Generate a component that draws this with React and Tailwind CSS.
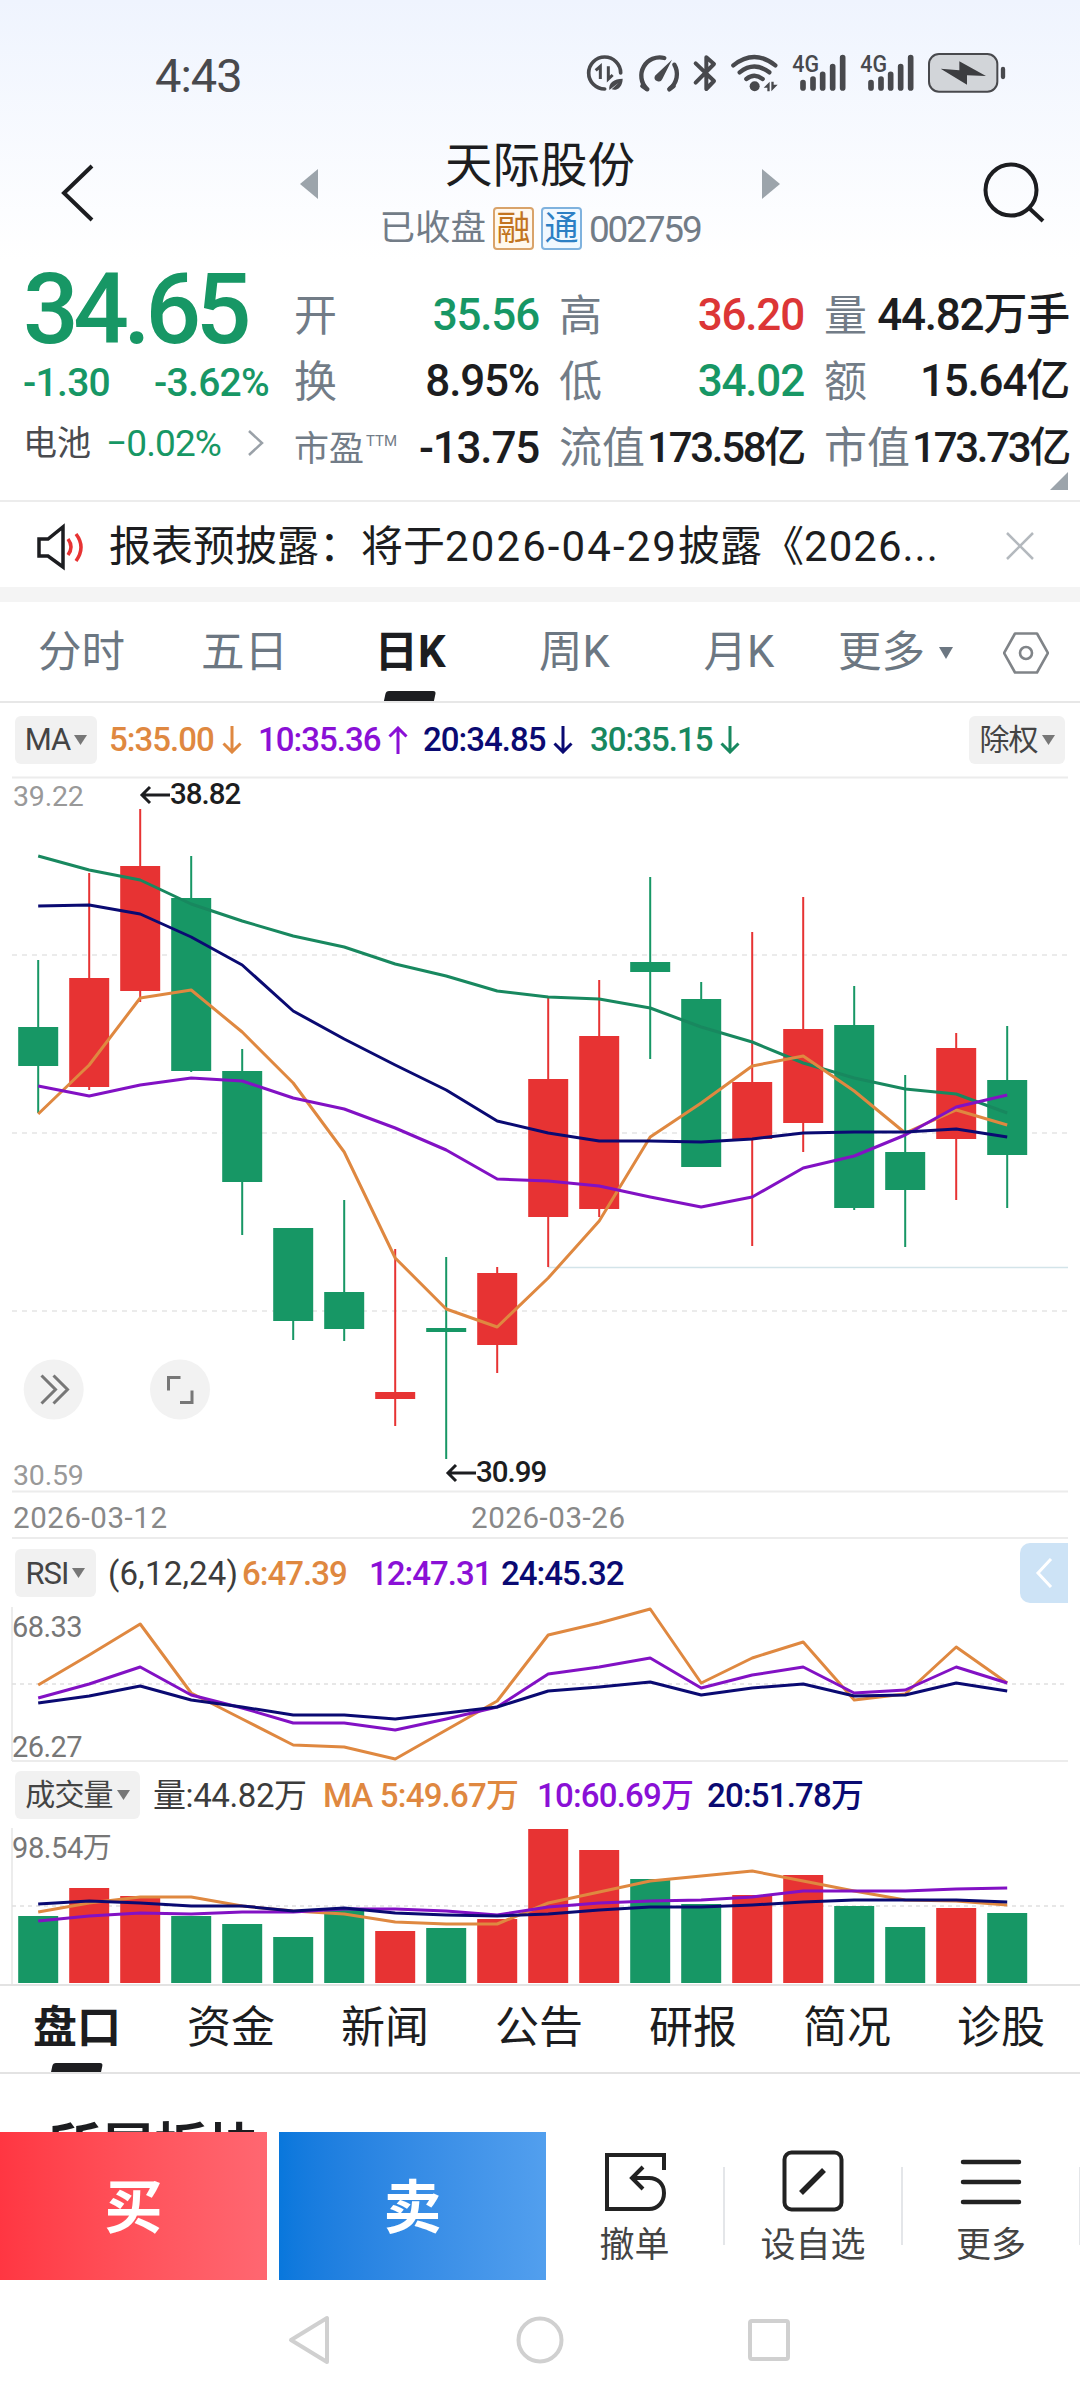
import React from 'react'

const UP = '#e73333'
const DOWN = '#179765'
const ORANGE = '#df8840'
const PURPLE = '#8211c4'
const NAVY = '#0a0a72'
const TEAL = '#18885f'

const FIRST_X = 38.2
const STEP = 51
const cx = (i) => FIRST_X + i * STEP

// [direction, high, body top, body bottom, low] in chart pixels
const candles = [
    ['down', 960, 1027, 1066, 1113],
    ['up', 873, 978, 1087, 1090],
    ['up', 809, 866, 991, 1002],
    ['down', 856, 898, 1071, 1072],
    ['down', 1049, 1071, 1182, 1235],
    ['down', 1228, 1228, 1321, 1340],
    ['down', 1200, 1292, 1329, 1341],
    ['up', 1249, 1392, 1399, 1426],
    ['down', 1257, 1328, 1332, 1459],
    ['up', 1267, 1273, 1345, 1373],
    ['up', 997, 1079, 1217, 1267],
    ['up', 980, 1036, 1209, 1217],
    ['down', 877, 962, 972, 1059],
    ['down', 982, 999, 1167, 1167],
    ['up', 932, 1082, 1139, 1246],
    ['up', 897, 1029, 1123, 1152],
    ['down', 986, 1025, 1208, 1210],
    ['down', 1075, 1152, 1190, 1247],
    ['up', 1033, 1048, 1139, 1200],
    ['down', 1026, 1080, 1155, 1208]
]

const maLines = [
    { color: TEAL, points: [856, 870, 880, 904, 921, 936, 947, 964, 976, 991, 997, 999, 1008, 1027, 1042, 1063, 1078, 1089, 1094, 1113] },
    { color: ORANGE, points: [1114, 1065, 998, 990, 1032, 1083, 1152, 1258, 1309, 1327, 1278, 1221, 1137, 1103, 1066, 1056, 1091, 1133, 1110, 1125] },
    { color: PURPLE, points: [1086, 1096, 1085, 1078, 1081, 1098, 1109, 1128, 1150, 1179, 1181, 1186, 1197, 1207, 1197, 1168, 1156, 1135, 1107, 1095] },
    { color: NAVY, points: [906, 905, 914, 937, 965, 1011, 1039, 1065, 1090, 1121, 1133, 1141, 1141, 1142, 1139, 1133, 1132, 1132, 1129, 1137] }
]

const rsiLines = [
    { color: ORANGE, points: [1685, 1655, 1624, 1693, 1719, 1745, 1747, 1759, 1730, 1701, 1635, 1623, 1609, 1683, 1658, 1642, 1700, 1694, 1647, 1683] },
    { color: PURPLE, points: [1698, 1684, 1667, 1695, 1708, 1723, 1723, 1730, 1719, 1707, 1674, 1667, 1658, 1688, 1675, 1667, 1693, 1690, 1667, 1683] },
    { color: NAVY, points: [1703, 1696, 1686, 1700, 1707, 1715, 1715, 1719, 1713, 1707, 1691, 1687, 1682, 1695, 1688, 1684, 1696, 1695, 1683, 1691] }
]

const volumeTops = [1916, 1888, 1896, 1916, 1924, 1937, 1909, 1931, 1928, 1919, 1829, 1850, 1879, 1904, 1895, 1875, 1906, 1927, 1908, 1913]

const volumeLines = [
    { color: ORANGE, points: [1912, 1903, 1897, 1897, 1906, 1911, 1914, 1922, 1924, 1924, 1903, 1892, 1881, 1876, 1871, 1881, 1891, 1900, 1901, 1905] },
    { color: PURPLE, points: [1921, 1916, 1913, 1914, 1912, 1912, 1909, 1909, 1911, 1915, 1907, 1903, 1901, 1900, 1897, 1891, 1891, 1891, 1889, 1888] },
    { color: NAVY, points: [1904, 1901, 1903, 1906, 1906, 1911, 1908, 1913, 1915, 1916, 1914, 1910, 1907, 1907, 1905, 1902, 1900, 1900, 1900, 1902] }
]

function Lines({ lines }) {
    return lines.map((line) => (
        <polyline
            key={line.color}
            points={line.points.map((y, i) => `${cx(i)},${y}`).join(' ')}
            fill="none"
            stroke={line.color}
            strokeWidth="3"
            strokeLinejoin="round"
        />
    ))
}

function StatusIcons() {
    return (
        <svg className="h-[90px] w-[480px]" viewBox="0 0 1440 270" fill="none" stroke="#48494d" strokeLinecap="round">
            {/* Data saver */}
            <path d="M134 177 A48 48 0 1 1 182 129" strokeWidth="11" />
            <path d="M107 121 L121 109 V147 M145 109 V147 L158 135" strokeWidth="9" strokeLinecap="butt" />
            <path d="M148 180 C145 158 162 146 188 146 C188 170 172 184 155 178 L176 158" fill="#48494d" stroke="none" />
            {/* Speed gauge */}
            <path d="M260 176 A55 55 0 0 1 313 84 M343 104 A55 55 0 0 1 329 176" strokeWidth="13" />
            <path d="M247 168 L262 178 M341 168 L328 178" strokeWidth="13" />
            <path d="M336 89 L307 147 A12 12 0 1 1 285 137 Z" fill="#48494d" stroke="none" />
            {/* Bluetooth */}
            <path d="M407 100 L462 153 L439 177 V82 L462 102 L407 158" strokeWidth="12" strokeLinejoin="round" />
            {/* Wi-Fi */}
            <path d="M520 106 Q583 56 646 106 M539 127 Q583 92 628 127 M559 147 Q583 128 608 147" strokeWidth="13" />
            <circle cx="584" cy="169" r="15" fill="#48494d" stroke="none" />
            <path d="M611 173 L629 155 V184 H622 V173 Z M634 155 V184 L653 164 H641 V155 Z" fill="#48494d" stroke="none" />
            {[0, 204].map((dx) => (
                <g key={dx} transform={`translate(${dx} 0)`}>
                    <text x="697" y="127" fontSize="70" fontWeight="500" fontFamily="Roboto, sans-serif" textLength="80" lengthAdjust="spacingAndGlyphs" fill="#48494d" stroke="none">4G</text>
                    <path d="M729 158 V174 M759 147 V174 M788 133 V174 M818 110 V174 M848 83 V174" strokeWidth="17" />
                </g>
            ))}
            {/* Battery */}
            <rect x="1107" y="72" width="205" height="113" rx="30" fill="#d2d5d9" strokeWidth="6" />
            <path d="M1142 116 L1198 121 V94 L1278 138 L1221 136 V164 Z" fill="#3c3d40" stroke="none" />
            <path d="M1329 117 V141" strokeWidth="13" />
        </svg>
    )
}

function StatusBar() {
    return (
        <div className="flex h-[120px] items-start pt-[30px]">
            <div className="flex h-[90px] w-[560px] items-center pl-[155px] text-[47px] leading-none tracking-[-1px] text-[#48494d]">4:43</div>
            <StatusIcons />
        </div>
    )
}

function Header() {
    return (
        <header className="flex h-[140px] items-start">
            <svg className="ml-[58px] mt-[43px] h-[60px] w-[40px]" viewBox="0 0 40 60" fill="none" stroke="#1c1d20" strokeWidth="4">
                <path d="M34 3 L6 30 L34 57" />
            </svg>
            <svg className="ml-[202px] mt-[49px] h-[30px] w-[18px]" viewBox="0 0 18 30">
                <path d="M18 0 V30 L0 15 Z" fill="#9ca4ab" />
            </svg>
            <div className="flex w-[444px] flex-col items-center">
                <h1 className="mt-[23px] text-[47.5px] leading-none text-[#1c1d20]">天际股份</h1>
                <div className="mt-[16px] flex items-center gap-[7px] text-[35.5px] leading-none text-[#727c87]">
                    <span className="pt-[2px]">已收盘</span>
                    <span className="flex h-[43px] w-[41px] items-center justify-center rounded-[4px] border-2 border-[#d9a36a] bg-[#fff8ee] text-[34px] text-[#c27420]">融</span>
                    <span className="flex h-[43px] w-[41px] items-center justify-center rounded-[4px] border-2 border-[#7fb2de] bg-[#f0f8ff] text-[34px] text-[#2c7fc4]">通</span>
                    <span className="pt-[2px] text-[37px] tracking-[-2.2px]">002759</span>
                </div>
            </div>
            <svg className="mt-[49px] h-[30px] w-[18px]" viewBox="0 0 18 30">
                <path d="M0 0 V30 L18 15 Z" fill="#9ca4ab" />
            </svg>
            <svg className="ml-[202px] mt-[41px] h-[64px] w-[64px]" viewBox="0 0 64 64" fill="none" stroke="#1c1d20" strokeWidth="4">
                <circle cx="29" cy="29" r="25.5" />
                <path d="M47 47 L61 60" />
            </svg>
        </header>
    )
}

const quotes = [
    { label: '开', value: '35.56', tone: 'text-[#179765]' },
    { label: '高', value: '36.20', tone: 'text-[#dc3636]' },
    { label: '量', value: '44.82万手', tone: 'text-[#1c1d20]' },
    { label: '换', value: '8.95%', tone: 'text-[#1c1d20]' },
    { label: '低', value: '34.02', tone: 'text-[#179765]' },
    { label: '额', value: '15.64亿', tone: 'text-[#1c1d20]' },
    { label: '市盈', sup: 'TTM', value: '-13.75', tone: 'text-[#1c1d20]' },
    { label: '流值', value: '173.58亿', tone: 'text-[#1c1d20]', tight: true },
    { label: '市值', value: '173.73亿', tone: 'text-[#1c1d20]', tight: true }
]

function QuotePanel() {
    return (
        <section className="relative flex h-[242px] border-b-2 border-[#ececec]">
            <div className="flex w-[294px] flex-col pl-[23px] text-[#179765]">
                <div className="flex h-[92px] items-center pt-[8px] text-[98px] leading-none font-medium tracking-[-5.4px]">34.65</div>
                <div className="flex h-[60px] items-center gap-[43px] pt-[2px] text-[39px] leading-none font-medium tracking-[-0.7px]">
                    <span className="w-[88px]">-1.30</span>
                    <span>-3.62%</span>
                </div>
                <div className="flex h-[62px] items-center text-[37px] leading-none tracking-[-0.9px]">
                    <span className="w-[83px] text-[34px] tracking-normal text-[#4a4b4f]">电池</span>
                    <span className="w-[141px]">−0.02%</span>
                    <svg className="h-[28px] w-[18px]" viewBox="0 0 18 28" fill="none" stroke="#9aa1a8" strokeWidth="2.5">
                        <path d="M2 2 L15 14 L2 26" />
                    </svg>
                </div>
            </div>
            <div className="mt-[22px] grid h-[199px] w-[775px] grid-cols-3 grid-rows-3 gap-x-[20px]">
                {quotes.map((q) => (
                    <div key={q.label} className="flex items-center justify-between whitespace-nowrap leading-none">
                        {q.sup ? (
                            <span className="flex items-start pt-[3px] text-[35px] text-[#727c87]">
                                {q.label}
                                <sup className="top-0 ml-[2px] mt-[2px] text-[15px] leading-none">{q.sup}</sup>
                            </span>
                        ) : (
                            <span className="pt-[2px] text-[43px] text-[#727c87]">{q.label}</span>
                        )}
                        <span className={`font-medium ${q.tight ? 'text-[42px] tracking-[-2.3px]' : 'text-[44px] tracking-[-1.2px]'} ${q.tone}`}>{q.value}</span>
                    </div>
                ))}
            </div>
            <svg className="absolute right-[12px] bottom-[10px] h-[18px] w-[18px]" viewBox="0 0 18 18">
                <path d="M18 0 V18 H0 Z" fill="#9ca4ab" />
            </svg>
        </section>
    )
}

function NoticeBar() {
    return (
        <section className="flex h-[100px] items-center border-b-[15px] border-[#f4f4f4]">
            <svg className="ml-[35px] mt-[4px] h-[48px] w-[50px]" viewBox="0 0 50 48" fill="none" strokeWidth="3.5">
                <path d="M4 16 V33 H13 L28 44 V4 L13 16 Z" stroke="#1c1d20" />
                <path d="M33 16 Q39 24 33 32 M41 11 Q51 24 41 38" stroke="#e73333" />
            </svg>
            <p className="ml-[24px] w-[896px] pt-[4px] text-[42px] leading-none whitespace-nowrap text-[#1c1d20]">
                报表预披露：将于<span className="tracking-[2.1px]">2026-04-29</span>披露《<span className="tracking-[1px]">2026...</span>
            </p>
            <svg className="mt-[2px] h-[30px] w-[30px]" viewBox="0 0 30 30" fill="none" stroke="#b4b9be" strokeWidth="2.5">
                <path d="M2 2 L28 28 M28 2 L2 28" />
            </svg>
        </section>
    )
}

function PeriodTabs() {
    return (
        <nav className="flex h-[101px] items-center border-b-2 border-[#e7e7e7] text-[43.5px] leading-none text-[#6c7782]">
            <span className="w-[164px] pt-[3px] pl-[38px]">分时</span>
            <span className="w-[163px] pt-[3px] pl-[37px]">五日</span>
            <span className="relative flex h-full w-[166px] items-center justify-center pt-[3px] font-bold text-[#1c1d20]">
                日K
                <i className="absolute bottom-0 h-[10px] w-[50px] -skew-x-12 rounded-t-[3px] bg-[#1c1d20]" />
            </span>
            <span className="w-[163px] pt-[3px] text-center">周K</span>
            <span className="w-[166px] pt-[3px] text-center">月K</span>
            <span className="flex w-[181px] items-center pt-[3px] pl-[16px]">
                更多
                <svg className="ml-[14px] h-[12px] w-[14px]" viewBox="0 0 14 12"><path d="M0 0 H14 L7 12 Z" fill="#6c7782" /></svg>
            </span>
            <svg className="mt-[2px] h-[42px] w-[46px]" viewBox="0 0 46 42" fill="none" stroke="#808488" strokeWidth="2.6">
                <path d="M12 1.5 H34 L45 21 L34 40.5 H12 L1 21 Z" strokeLinejoin="round" />
                <circle cx="23" cy="21" r="6" />
            </svg>
        </nav>
    )
}

function Pill({ children, className }) {
    return (
        <span className={`flex h-[48px] items-center justify-center gap-[4px] rounded-[6px] bg-[#f1f1f1] text-[#444] ${className}`}>
            {children}
            <svg className="h-[10px] w-[13px]" viewBox="0 0 13 10"><path d="M0 0 H13 L6.5 10 Z" fill="#777" /></svg>
        </span>
    )
}

function TrendArrow({ up }) {
    return (
        <svg className={`ml-[8px] h-[28px] w-[20px] ${up ? 'rotate-180' : ''}`} viewBox="0 0 20 28" fill="none" stroke="currentColor" strokeWidth="3">
            <path d="M10 0 V26 M1.5 17.5 L10 26 L18.5 17.5" />
        </svg>
    )
}

function MaLegend() {
    return (
        <div className="flex h-[73px] items-center pl-[15px] text-[33px] leading-none font-medium tracking-[-1px]">
            <Pill className="w-[82px] text-[31px] font-normal">MA</Pill>
            <span className="ml-[12px] flex w-[149px] items-center text-[#df8840]">5:35.00<TrendArrow /></span>
            <span className="flex w-[165px] items-center text-[#8a10d6]">10:35.36<TrendArrow up /></span>
            <span className="flex w-[167px] items-center text-[#0a0a72]">20:34.85<TrendArrow /></span>
            <span className="flex w-[379px] items-center text-[#18885f]">30:35.15<TrendArrow /></span>
            <Pill className="w-[96px] text-[30px] font-normal">除权</Pill>
        </div>
    )
}

function CandleChart() {
    return (
        <svg className="block h-[763px] w-full" viewBox="0 776 1080 763" fontFamily="Roboto, sans-serif">
            <path d="M12 777.5 H1068 M12 1491.5 H1068 M12 1538 H1068" stroke="#ececec" strokeWidth="2" />
            <path d="M12 955 H1068 M12 1133 H1068 M12 1311 H1068" stroke="#ebebeb" strokeWidth="2" strokeDasharray="5 5" />
            <path d="M548 1267.5 H1068" stroke="#d3e4e9" strokeWidth="1.5" />

            {candles.map(([dir, high, top, bottom, low], i) => (
                <g key={i} fill={dir === 'up' ? UP : DOWN}>
                    <rect x={cx(i) - 1} y={high} width="2" height={low - high} />
                    <rect x={cx(i) - 20} y={top} width="40" height={bottom - top} />
                </g>
            ))}
            <Lines lines={maLines} />

            <g fontSize="28.5" fill="#999" letterSpacing="-0.2">
                <text x="13" y="806">39.22</text>
                <text x="13" y="1485">30.59</text>
            </g>
            <g fontSize="29.5" fontWeight="500" fill="#1c1d20" letterSpacing="-1">
                <text x="170" y="804">38.82</text>
                <text x="476" y="1481.5">30.99</text>
            </g>
            <path d="M170 795 H143 M150 787 L142 795 L150 803 M476 1473 H449 M456 1465 L448 1473 L456 1481" fill="none" stroke="#1c1d20" strokeWidth="3" />
            <g fontSize="29.5" fill="#888">
                <text x="13" y="1527.5" textLength="154">2026-03-12</text>
                <text x="471" y="1527.5" textLength="154">2026-03-26</text>
            </g>

            {/* Expand / fullscreen buttons */}
            <g fill="none" stroke="#777" strokeWidth="3">
                <circle cx="53.7" cy="1389.5" r="30" fill="#f2f2f2" stroke="none" />
                <path d="M41.5 1375.5 L55.5 1389.5 L41.5 1403.5 M53.5 1375.5 L67.5 1389.5 L53.5 1403.5" />
                <circle cx="180" cy="1389.5" r="30" fill="#f2f2f2" stroke="none" />
                <path d="M180.5 1377.5 H168.5 V1390.5 M192 1390.5 V1402.5 H180" />
            </g>
        </svg>
    )
}

function RsiPanel() {
    return (
        <section className="h-[223px]">
            <div className="flex h-[68px] items-center pl-[15px] text-[33px] leading-none font-medium tracking-[-1px]">
                <Pill className="w-[81px] text-[31px] font-normal">RSI</Pill>
                <span className="ml-[12px] w-[134px] font-normal tracking-[0.2px] text-[#3c3c3c]">(6,12,24)</span>
                <span className="w-[127px] text-[#df8840]">6:47.39</span>
                <span className="w-[132px] text-[#8a10d6]">12:47.31</span>
                <span className="w-[519px] text-[#0a0a72]">24:45.32</span>
                <span className="flex h-[60px] w-[48px] items-center justify-center rounded-l-[10px] bg-[#cde3f6]">
                    <svg className="h-[30px] w-[18px]" viewBox="0 0 18 30" fill="none" stroke="#fff" strokeWidth="3">
                        <path d="M16 1 L3 15 L16 29" />
                    </svg>
                </span>
            </div>
            <svg className="block h-[155px] w-full overflow-visible" viewBox="0 1607 1080 155" fontFamily="Roboto, sans-serif">
                <path d="M12 1761 H1068 M12 1607 V1761" stroke="#ececec" strokeWidth="2" />
                <path d="M12 1684 H1068" stroke="#e0e0e0" strokeWidth="1.5" strokeDasharray="4 4" />
                <Lines lines={rsiLines} />
                <g fontSize="29" fill="#777" letterSpacing="-0.6">
                    <text x="12" y="1637">68.33</text>
                    <text x="12" y="1757">26.27</text>
                </g>
            </svg>
        </section>
    )
}

function VolumePanel() {
    return (
        <section className="h-[224px] border-b-2 border-[#e3e3e3]">
            <div className="flex h-[66px] items-center pl-[15px] text-[33px] leading-none font-medium tracking-[-0.8px] whitespace-nowrap">
                <Pill className="w-[125px] text-[30px] font-normal">成交量</Pill>
                <span className="ml-[13px] w-[170px] font-normal tracking-[-0.4px] text-[#3c3c3c]">量:44.82万</span>
                <span className="w-[214px] text-[#df8840]">MA 5:49.67万</span>
                <span className="w-[170px] text-[#8a10d6]">10:60.69万</span>
                <span className="text-[#0a0a72]">20:51.78万</span>
            </div>
            <svg className="block h-[156px] w-full" viewBox="0 1828 1080 156" fontFamily="Roboto, 'Noto Sans CJK SC', sans-serif">
                <path d="M12 1828 V1984" stroke="#ececec" strokeWidth="2" />
                <path d="M12 1906 H1068" stroke="#e0e0e0" strokeWidth="1.5" strokeDasharray="4 4" />
                {volumeTops.map((top, i) => (
                    <rect key={i} x={cx(i) - 20} y={top} width="40" height={1983 - top} fill={candles[i][0] === 'up' ? UP : DOWN} />
                ))}
                <Lines lines={volumeLines} />
                <text x="12" y="1858" fontSize="29" fill="#777" letterSpacing="-0.4">98.54万</text>
            </svg>
        </section>
    )
}

function DetailTabs() {
    const tabs = ['盘口', '资金', '新闻', '公告', '研报', '简况', '诊股']
    return (
        <nav className="flex h-[88px] border-b-2 border-[#e3e3e3] text-[44px] leading-none text-[#1c1d20]">
            {tabs.map((tab, i) => (
                <span key={tab} className={`relative flex h-full w-[154px] shrink-0 justify-center pt-[20px] ${i === 0 ? 'font-bold' : ''}`}>
                    {tab}
                    {i === 0 && <i className="absolute bottom-0 h-[9px] w-[50px] -skew-x-12 rounded-t-[3px] bg-[#1c1d20]" />}
                </span>
            ))}
        </nav>
    )
}

function ActionBar() {
    return (
        <footer className="flex h-[148px] bg-white">
            <button className="w-[267px] bg-linear-to-r from-[#ff3642] to-[#ff6771] pt-[4px] text-[58px] leading-none font-bold text-white">买</button>
            <button className="ml-[12px] w-[267px] bg-linear-to-r from-[#0877dc] to-[#529fee] pt-[4px] text-[58px] leading-none font-bold text-white">卖</button>
            <div className="flex flex-1 items-center text-[35px] leading-none text-[#444]">
                <div className="flex w-[177px] flex-col items-center gap-[16px]">
                    <svg className="h-[62px] w-[62px]" viewBox="0 0 62 62" fill="none" stroke="#222" strokeWidth="4">
                        <path d="M60 20 V5 H3 V59 H45 C54 59 60 52 60 43 C60 34 54 28 45 28 H29 M39 17 L28 28 L39 39" />
                    </svg>
                    撤单
                </div>
                <i className="h-[78px] w-[2px] bg-[#e4e6e9]" />
                <div className="flex w-[176px] flex-col items-center gap-[16px]">
                    <svg className="h-[62px] w-[62px]" viewBox="0 0 62 62" fill="none" stroke="#222">
                        <rect x="2.5" y="2.5" width="57" height="57" rx="7" strokeWidth="4" />
                        <path d="M19 43 L42 20" strokeWidth="5.5" />
                    </svg>
                    设自选
                </div>
                <i className="h-[78px] w-[2px] bg-[#e4e6e9]" />
                <div className="flex w-[176px] flex-col items-center gap-[16px]">
                    <svg className="h-[62px] w-[62px]" viewBox="0 0 62 62" stroke="#222" strokeWidth="4.5" strokeLinecap="round">
                        <path d="M3 12 H59 M3 32 H59 M3 52 H59" />
                    </svg>
                    更多
                </div>
                <i className="h-[78px] w-[1px] bg-[#e4e6e9]" />
            </div>
        </footer>
    )
}

function SystemNav() {
    return (
        <div className="flex h-[120px] items-center bg-white">
            <svg className="ml-[287px] h-[50px] w-[44px]" viewBox="0 0 44 50" fill="none" stroke="#d0d0d0" strokeWidth="4" strokeLinejoin="round">
                <path d="M40 3 V47 L4 25 Z" />
            </svg>
            <svg className="ml-[184px] h-[50px] w-[50px]" viewBox="0 0 50 50" fill="none" stroke="#d0d0d0" strokeWidth="4">
                <circle cx="25" cy="25" r="21.5" />
            </svg>
            <svg className="ml-[182px] h-[44px] w-[44px]" viewBox="0 0 44 44" fill="none" stroke="#d0d0d0" strokeWidth="4">
                <rect x="3" y="3" width="38" height="38" rx="2" />
            </svg>
        </div>
    )
}

export default function App() {
    return (
        <div className="flex h-[2400px] w-[1080px] flex-col overflow-hidden bg-white font-['Roboto','Noto_Sans_CJK_SC',sans-serif]">
            <div className="bg-linear-to-b from-[#eff4fe] to-white">
                <StatusBar />
                <Header />
            </div>
            <QuotePanel />
            <NoticeBar />
            <PeriodTabs />
            <MaLegend />
            <CandleChart />
            <RsiPanel />
            <VolumePanel />
            <DetailTabs />
            <div className="h-[58px] overflow-hidden pt-[49px] pl-[48px] text-[53px] leading-none font-bold text-[#1c1d20]">所属板块</div>
            <ActionBar />
            <SystemNav />
        </div>
    )
}
